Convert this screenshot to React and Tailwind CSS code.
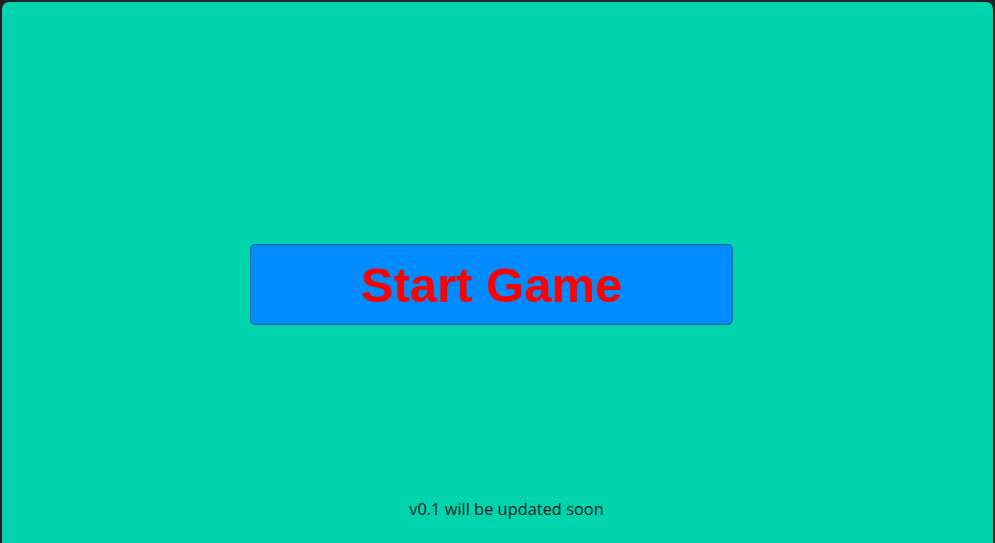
import React from 'react';

export default function App() {
  return (
    <div className="h-[543px] w-full bg-[#202124] pt-[2px] px-[2px] overflow-hidden">
      <div className="h-full bg-[#00d4ae] rounded-t-[7px] flex flex-col items-center">
        <button
          className="mt-[242px] mr-[12px] w-[483px] h-[81px] bg-[#008cff] border border-[#1d5d80] rounded-[5px] flex items-center justify-center pt-[2px] text-[#ff0000] text-[49px] font-bold leading-none"
          style={{ fontFamily: '"Liberation Sans", Arial, sans-serif' }}
        >
          Start Game
        </button>
        <div className="flex-1" />
        <p
          className="pb-[22px] pl-[18px] text-[16.4px] leading-[24px] text-[#1b1b1b]"
          style={{ fontFamily: '"Open Sans", "Noto Sans", sans-serif' }}
        >
          v0.1 will be updated soon
        </p>
      </div>
    </div>
  );
}
